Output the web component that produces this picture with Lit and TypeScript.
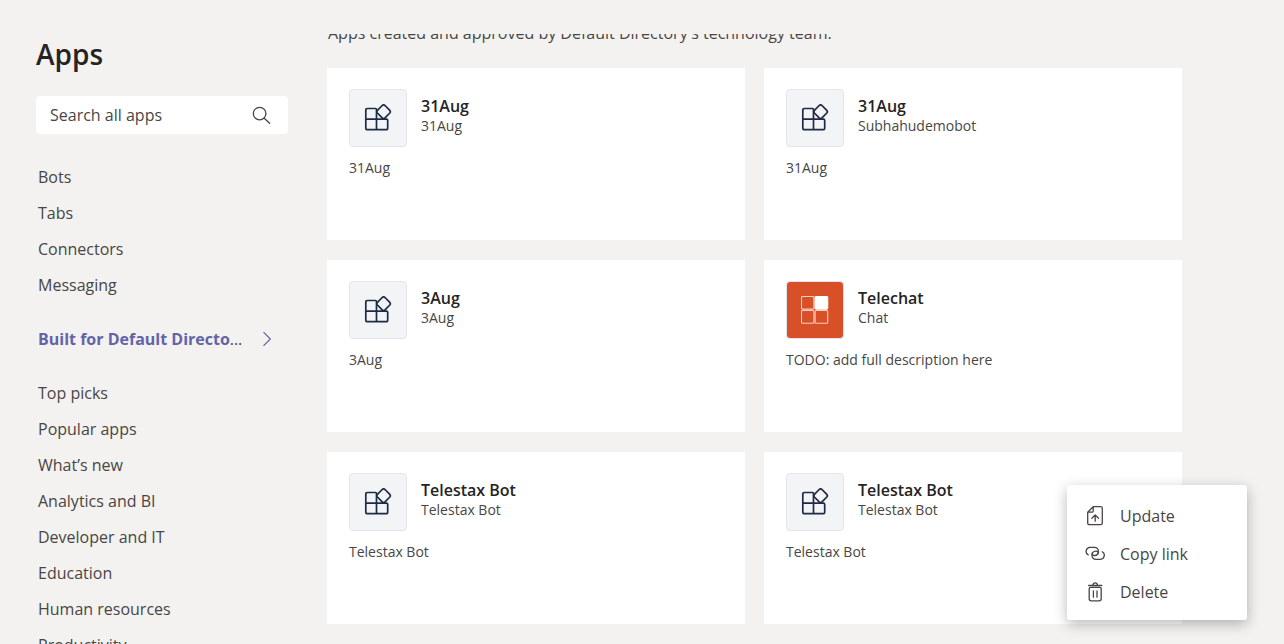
import { LitElement, html, css, svg, nothing } from "lit";
import { customElement, property } from "lit/decorators.js";

interface AppInfo {
  name: string;
  developer: string;
  description: string;
  icon: "blocks" | "tiles";
  menuOpen?: boolean;
}

const CAPABILITIES = ["Bots", "Tabs", "Connectors", "Messaging"];
const CATEGORIES = [
  "Top picks",
  "Popular apps",
  "What’s new",
  "Analytics and BI",
  "Developer and IT",
  "Education",
  "Human resources",
  "Productivity",
];

const APPS: AppInfo[] = [
  { name: "31Aug", developer: "31Aug", description: "31Aug", icon: "blocks" },
  { name: "31Aug", developer: "Subhahudemobot", description: "31Aug", icon: "blocks" },
  { name: "3Aug", developer: "3Aug", description: "3Aug", icon: "blocks" },
  { name: "Telechat", developer: "Chat", description: "TODO: add full description here", icon: "tiles" },
  { name: "Telestax Bot", developer: "Telestax Bot", description: "Telestax Bot", icon: "blocks" },
  { name: "Telestax Bot", developer: "Telestax Bot", description: "Telestax Bot", icon: "blocks", menuOpen: true },
];

const blocksIcon = svg`
  <svg width="28" height="28" viewBox="0 0 28 28" fill="none" stroke="#1f2a44" stroke-width="1.7" stroke-linejoin="round" aria-hidden="true">
    <path d="M12.5 15.5V5.5Q12.5 4.5 11.5 4.5H3.5Q1.8 4.5 1.8 6.2V24Q1.8 25.7 3.5 25.7H22Q23.7 25.7 23.7 24V16.6Q23.7 15.2 22.3 15.2H1.8M12.5 15V25.7"/>
    <path d="M18.2 1.5Q19.6 .3 21 1.5L25.8 6.4Q26.9 7.7 25.800 9L21 13.9Q19.6 15.2 18.2 13.9L13.4 9Q12.3 7.7 13.4 6.4Z"/>
  </svg>`;

const tilesIcon = svg`
  <svg width="28" height="28" viewBox="0 0 28 28" fill="none" stroke="#f7cfc2" stroke-width="1.1" aria-hidden="true">
    <rect x="0.5" y="0.5" width="12.4" height="12.6" rx="1"/>
    <rect x="14.1" y="0.5" width="12.6" height="12.6" rx="1" fill="#fff" stroke="#fff"/>
    <rect x="0.5" y="14.5" width="12.4" height="12.8" rx="1"/>
    <rect x="14.1" y="14.5" width="12.6" height="12.8" rx="1"/>
  </svg>`;

const updateIcon = svg`
  <svg width="20" height="20" viewBox="0 0 20 20" fill="none" stroke="currentColor" stroke-width="1.3" stroke-linejoin="round" stroke-linecap="round" aria-hidden="true">
    <path d="M8.2 .7h7.4q1.7 0 1.7 1.700v14.600q0 1.700-1.700 1.700H4.400q-1.700 0-1.700-1.700V6.200zM8.200 .7v4.200q0 1.300-1.300 1.300H2.700M10.200 15.200V8.900M6.900 12.200 10.200 8.900 13.500 12.200"/>
  </svg>`;

const linkIcon = svg`
  <svg width="20" height="20" viewBox="0 0 20 20" fill="none" stroke="currentColor" stroke-width="1.3" stroke-linecap="round" aria-hidden="true">
    <path d="M3.200 10.900C-.4 9 .9 3.300 5 3.300H9.200C14.800 3.300 14.800 11.500 9.600 11.500C7.800 11.500 6.800 10.300 7.300 8.900"/>
    <path d="M3.200 10.900C-.4 9 .9 3.300 5 3.300H9.200C14.800 3.300 14.800 11.500 9.600 11.500C7.800 11.500 6.800 10.300 7.300 8.900" transform="rotate(180 10.200 9.300)"/>
  </svg>`;

const deleteIcon = svg`
  <svg width="20" height="20" viewBox="0 0 20 20" fill="none" stroke="currentColor" stroke-width="1.300" stroke-linecap="round" stroke-linejoin="round" aria-hidden="true">
    <path d="M3.600 3.500H16.800M7.800 3.300Q8.200 .8 10.200 .8T12.600 3.300M5.600 5.400H14.800Q16.200 5.400 16.200 6.800V16.800Q16.200 18.800 14.200 18.800H6.200Q4.200 18.800 4.200 16.800V6.800Q4.200 5.400 5.600 5.400ZM8.400 8.800V15.200M12 8.800V15.200"/>
  </svg>`;

@customElement("app-menu")
export class AppMenu extends LitElement {
  static styles = css`
    :host {
      display: block;
      box-sizing: border-box;
      width: 180px;
      padding: 12px 0 9px;
      background: #fff;
      border-radius: 3px;
      box-shadow: 0 4px 14px rgba(0, 0, 0, 0.28);
    }
    .item {
      display: flex;
      align-items: center;
      gap: 15px;
      width: 100%;
      height: 38px;
      padding: 0 18px;
      border: 0;
      background: none;
      color: #484644;
      font: inherit;
      font-size: 16px;
      cursor: pointer;
    }
    .item:hover {
      background: #f3f2f1;
    }
  `;

  render() {
    return html`
      <button class="item" role="menuitem">${updateIcon}<span>Update</span></button>
      <button class="item" role="menuitem">${linkIcon}<span>Copy link</span></button>
      <button class="item" role="menuitem">${deleteIcon}<span>Delete</span></button>
    `;
  }
}

@customElement("app-card")
export class AppCard extends LitElement {
  @property({ attribute: false }) app!: AppInfo;

  static styles = css`
    :host {
      display: block;
      position: relative;
      box-sizing: border-box;
      min-height: 172px;
      padding: 21px 22px;
      background: #fff;
      color: #484644;
      font-size: 14px;
      line-height: 20px;
    }
    .head {
      display: flex;
      gap: 14px;
    }
    .icon {
      display: flex;
      align-items: center;
      justify-content: center;
      box-sizing: border-box;
      flex: none;
      width: 58px;
      height: 58px;
      border: 1px solid #e2e4f0;
      border-radius: 4px;
      background: #f3f4f6;
    }
    .tiles {
      background: #d85028;
    }
    .name {
      margin: 7px 0 0;
      color: #252423;
      font-size: 16px;
      font-weight: 600;
      line-height: 20px;
    }
    .developer,
    .description {
      margin: 0;
    }
    .description {
      margin-top: 11px;
    }
    .menu {
      position: absolute;
      top: 33px;
      right: -65px;
    }
  `;

  render() {
    const { name, developer, description, icon, menuOpen } = this.app;
    return html`
      <div class="head">
        <div class="icon ${icon}">${icon === "tiles" ? tilesIcon : blocksIcon}</div>
        <div>
          <h2 class="name">${name}</h2>
          <p class="developer">${developer}</p>
        </div>
      </div>
      <p class="description">${description}</p>
      ${menuOpen ? html`<app-menu class="menu" role="menu"></app-menu>` : nothing}
    `;
  }
}

@customElement("app-root")
export class AppRoot extends LitElement {
  static styles = css`
    :host {
      display: grid;
      grid-template-columns: 288px minmax(0, 1fr);
      column-gap: 39px;
      height: 100vh;
      overflow: hidden;
      background: #f3f2f1;
      color: #484644;
      font-family: "Segoe UI", "Open Sans", "Noto Sans", sans-serif;
      font-size: 16px;
    }
    .side {
      padding: 34px 0 0 36px;
    }
    .title {
      margin: 0 0 22px;
      color: #252423;
      font-size: 28px;
      font-weight: 600;
      line-height: 40px;
    }
    .search {
      display: flex;
      align-items: center;
      height: 38px;
      padding: 0 16px 0 14px;
      margin-bottom: 25px;
      border-radius: 4px;
      background: #fff;
    }
    .field {
      flex: 1;
      min-width: 0;
      padding: 0;
      border: 0;
      outline: 0;
      background: none;
      color: inherit;
      font: inherit;
    }
    .field::placeholder {
      color: #484644;
      opacity: 1;
    }
    .list {
      margin: 0 0 18px;
      padding: 0;
      list-style: none;
    }
    .link {
      display: block;
      padding-left: 2px;
      color: inherit;
      line-height: 36px;
      text-decoration: none;
    }
    .current {
      display: flex;
      align-items: center;
      justify-content: space-between;
      padding-right: 15px;
    }
    .label {
      width: 206px;
      overflow: hidden;
      text-overflow: ellipsis;
      white-space: nowrap;
    }
    .strong {
      color: #6264a7;
      font-weight: 700;
    }
    .main {
      margin-top: 34px;
      padding-right: 102px;
      overflow: hidden;
    }
    .intro {
      margin: -13px 0 23px;
      padding-left: 1px;
      line-height: 24px;
    }
    .grid {
      display: grid;
      grid-template-columns: repeat(2, minmax(0, 1fr));
      gap: 20px 19px;
    }
  `;

  private links(items: string[]) {
    return html`<ul class="list">
      ${items.map((item) => html`<li><a class="link" href="#">${item}</a></li>`)}
    </ul>`;
  }

  render() {
    return html`
      <aside class="side">
        <h1 class="title">Apps</h1>
        <div class="search">
          <input class="field" type="text" aria-label="Search all apps" placeholder="Search all apps" />
          <svg width="20" height="20" viewBox="0 0 20 20" fill="none" stroke="#484644" stroke-width="1.3" stroke-linecap="round" aria-hidden="true">
            <circle cx="7.6" cy="8.6" r="6.3" />
            <path d="M12.2 13.2L17.6 18.3" />
          </svg>
        </div>
        <nav>
          ${this.links(CAPABILITIES)}
          <ul class="list">
            <li>
              <a class="link current" href="#" aria-current="page">
                <span class="label"><span class="strong">Built for Default Directory</span></span>
                <svg width="12" height="16" viewBox="0 0 12 16" fill="none" stroke="#6264a7" stroke-width="1.2" aria-hidden="true">
                  <path d="M2.5 1.2L9.3 8L2.5 14.8" />
                </svg>
              </a>
            </li>
          </ul>
          ${this.links(CATEGORIES)}
        </nav>
      </aside>
      <main class="main">
        <p class="intro">Apps created and approved by Default Directory's technology team.</p>
        <section class="grid">${APPS.map((app) => html`<app-card .app=${app}></app-card>`)}</section>
      </main>
    `;
  }
}
